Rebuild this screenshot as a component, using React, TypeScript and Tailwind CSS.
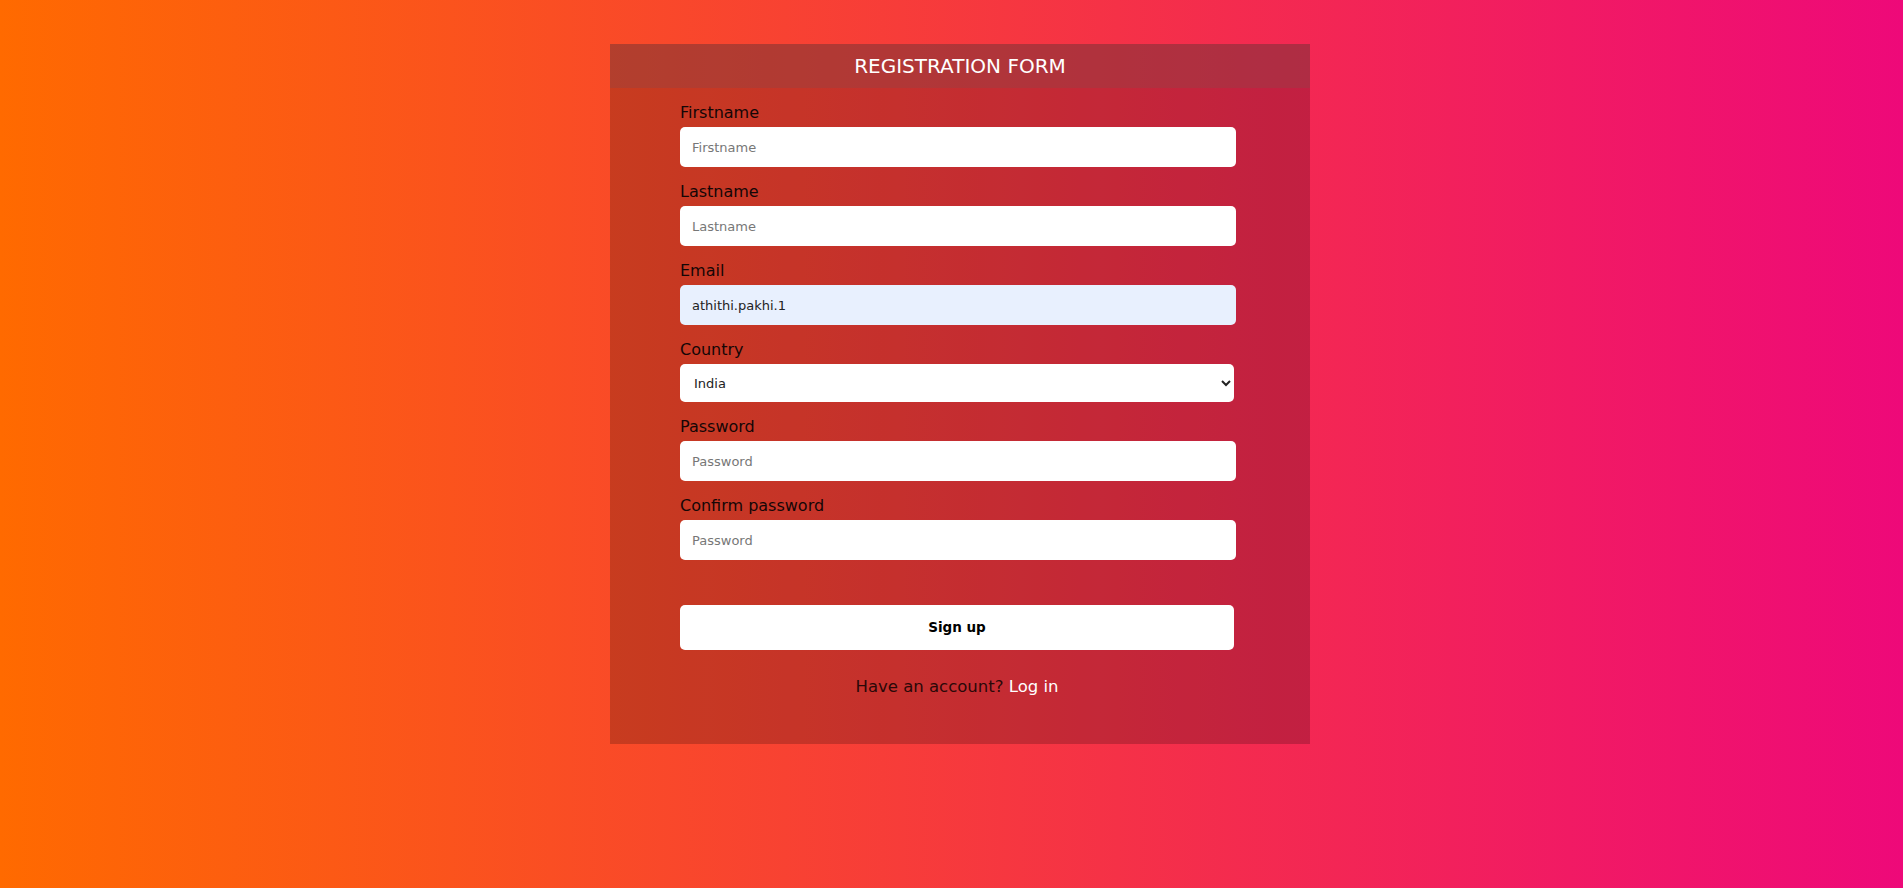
import React from 'react';

const fields = [
  { label: 'Firstname', placeholder: 'Firstname', type: 'text' },
  { label: 'Lastname', placeholder: 'Lastname', type: 'text' },
];

const Field: React.FC<{ label: string; children: React.ReactNode }> = ({ label, children }) => (
  <div className="flex flex-col mb-[12px]">
    <label className="h-[24px] leading-[26px] text-[16px] text-[#140606] mb-[3px]">{label}</label>
    {children}
  </div>
);

const inputCls =
  'w-[556px] h-[40px] rounded-[5px] bg-white px-[12px] text-[13px] text-[#222] placeholder:text-[#777] outline-none border-0';

export default function App() {
  return (
    <div
      className="min-h-screen w-full bg-[linear-gradient(to_right,#ff6a00,#ee0979)] flex justify-center pl-[17px] pt-[44px]"
      style={{ fontFamily: '"DejaVu Sans", "Liberation Sans", sans-serif' }}
    >
      <div className="w-[700px] h-[700px] bg-black/20 flex flex-col">
        {/* Header */}
        <div className="h-[44px] flex items-center justify-center bg-[rgba(140,68,72,0.36)]">
          <h1 className="text-[20px] text-white font-normal">REGISTRATION FORM</h1>
        </div>

        {/* Form */}
        <form className="pt-[12px] pl-[70px] flex flex-col" onSubmit={(e) => e.preventDefault()}>
          {fields.map((f) => (
            <Field key={f.label} label={f.label}>
              <input type={f.type} placeholder={f.placeholder} className={inputCls} />
            </Field>
          ))}
          <Field label="Email">
            <input
              type="text"
              defaultValue="athithi.pakhi.1"
              className={inputCls + ' !bg-[#e8f0fe]'}
            />
          </Field>
          <Field label="Country">
            <select
              defaultValue="India"
              className="w-[554px] h-[38px] rounded-[5px] bg-white pl-[10px] pr-[4px] text-[13px] text-[#222] border-0 outline-none"
            >
              <option>India</option>
              <option>USA</option>
              <option>UK</option>
            </select>
          </Field>
          <Field label="Password">
            <input type="password" placeholder="Password" className={inputCls} />
          </Field>
          <Field label="Confirm password">
            <input type="password" placeholder="Password" className={inputCls} />
          </Field>

          <button
            type="submit"
            className="mt-[33px] w-[554px] h-[45px] rounded-[5px] bg-white text-[13.5px] font-bold text-black"
          >
            Sign up
          </button>

          <p className="mt-[25px] w-[554px] h-[24px] leading-[24px] text-center text-[16.5px] text-[#2a0808]">
            Have an account? <a href="#" className="text-white">Log in</a>
          </p>
        </form>
      </div>
    </div>
  );
}
